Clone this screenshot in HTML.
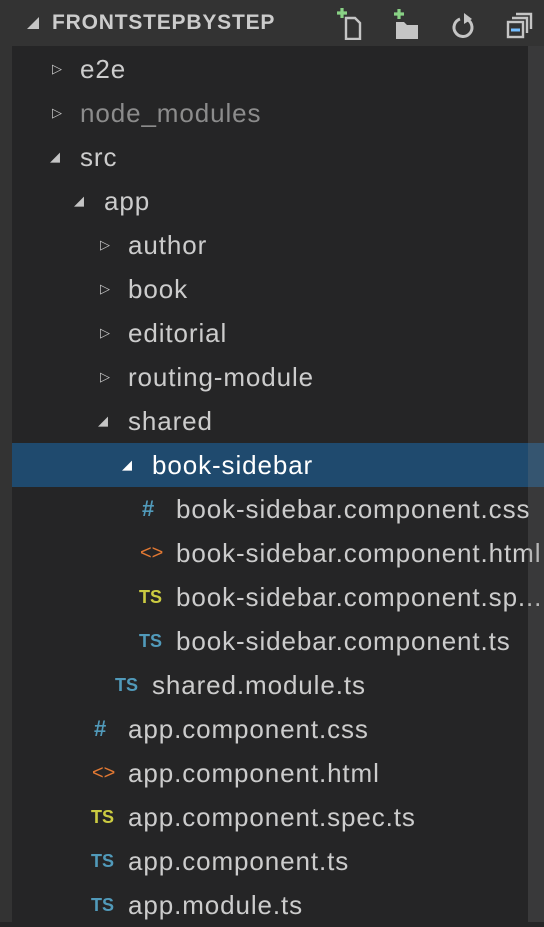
<!DOCTYPE html>
<html><head><meta charset="utf-8"><style>
*{margin:0;padding:0;box-sizing:border-box}
body{width:544px;height:922px;overflow:hidden;background:#252526;font-family:"Liberation Sans",sans-serif;position:relative}
.strip{position:absolute;left:0;top:0;width:12px;height:922px;background:#333}
.hdr{position:absolute;left:12px;top:0;width:532px;height:46px;background:#333}
.hdr .t{position:absolute;left:40px;top:11px;font-size:21px;font-weight:bold;color:#ccc;letter-spacing:0.8px}
.row{position:absolute;left:12px;width:532px;height:44px;color:#ccc;font-size:26px;letter-spacing:0.9px;line-height:44px;white-space:nowrap;overflow:hidden}
.row.sel{background:#1f4a6e;color:#fff}
.arr{position:absolute;top:0;font-size:13px;color:#c5c5c5;letter-spacing:0}
.tx{position:absolute;top:0}
.ic{position:absolute;top:0;font-weight:bold;letter-spacing:0}
.sb{position:absolute;left:528px;top:46px;width:16px;height:876px;background:rgba(121,121,121,0.25)}
</style></head><body>
<div class="strip"></div>
<div class="hdr">
<svg style="position:absolute;left:14px;top:16px" width="14" height="14"><polygon points="13,1 13,13 1,13" fill="#c5c5c5"/></svg>
<div class="t">FRONTSTEPBYSTEP</div>
<svg style="position:absolute;left:324px;top:6px" width="30" height="34"><path d="M10 12h9l5 5v16H10z" fill="none" stroke="#c5c5c5" stroke-width="2.4"/><path d="M6 2v10M1 7h10" stroke="#89d185" stroke-width="3.2"/></svg>
<svg style="position:absolute;left:380px;top:6px" width="30" height="34"><path d="M4 16h8l3 3h11v14H4z" fill="#c5c5c5"/><path d="M7 3v10M2 8h10" stroke="#89d185" stroke-width="3.2"/></svg>
<svg style="position:absolute;left:436px;top:6px" width="30" height="34"><path d="M20 14a9 9 0 1 1-8-1" fill="none" stroke="#c5c5c5" stroke-width="3"/><polygon points="16,7 24,13 16,18" fill="#c5c5c5"/></svg>
<svg style="position:absolute;left:492px;top:6px" width="30" height="34"><rect x="4" y="16" width="15" height="15" fill="none" stroke="#c5c5c5" stroke-width="2.4"/><path d="M8 12h15v15M12 8h15v15" fill="none" stroke="#c5c5c5" stroke-width="2.4"/><path d="M7 24h9" stroke="#75beff" stroke-width="3"/></svg>
</div>
<div class="row" style="top:47px"><span class="arr" style="left:40px">▷</span><span class="tx" style="left:68px">e2e</span></div>
<div class="row" style="top:91px;color:#8c8c8c"><span class="arr" style="left:40px">▷</span><span class="tx" style="left:68px">node_modules</span></div>
<div class="row" style="top:135px"><span class="arr" style="left:38px">◢</span><span class="tx" style="left:68px">src</span></div>
<div class="row" style="top:179px"><span class="arr" style="left:62px">◢</span><span class="tx" style="left:92px">app</span></div>
<div class="row" style="top:223px"><span class="arr" style="left:88px">▷</span><span class="tx" style="left:116px">author</span></div>
<div class="row" style="top:267px"><span class="arr" style="left:88px">▷</span><span class="tx" style="left:116px">book</span></div>
<div class="row" style="top:311px"><span class="arr" style="left:88px">▷</span><span class="tx" style="left:116px">editorial</span></div>
<div class="row" style="top:355px"><span class="arr" style="left:88px">▷</span><span class="tx" style="left:116px">routing-module</span></div>
<div class="row" style="top:399px"><span class="arr" style="left:86px">◢</span><span class="tx" style="left:116px">shared</span></div>
<div class="row sel" style="top:443px"><span class="arr" style="left:110px;color:#fff">◢</span><span class="tx" style="left:140px">book-sidebar</span></div>
<div class="row" style="top:487px"><span class="ic" style="left:130px;color:#519aba;font-size:22px">#</span><span class="tx" style="left:164px">book-sidebar.component.css</span></div>
<div class="row" style="top:531px"><span class="ic" style="left:128px;color:#e37933;font-size:20px;font-weight:normal">&lt;&gt;</span><span class="tx" style="left:164px">book-sidebar.component.html</span></div>
<div class="row" style="top:575px"><span class="ic" style="left:127px;color:#cbcb41;font-size:18px">TS</span><span class="tx" style="left:164px">book-sidebar.component.sp...</span></div>
<div class="row" style="top:619px"><span class="ic" style="left:127px;color:#519aba;font-size:18px">TS</span><span class="tx" style="left:164px">book-sidebar.component.ts</span></div>
<div class="row" style="top:663px"><span class="ic" style="left:103px;color:#519aba;font-size:18px">TS</span><span class="tx" style="left:140px">shared.module.ts</span></div>
<div class="row" style="top:707px"><span class="ic" style="left:82px;color:#519aba;font-size:22px">#</span><span class="tx" style="left:116px">app.component.css</span></div>
<div class="row" style="top:751px"><span class="ic" style="left:80px;color:#e37933;font-size:20px;font-weight:normal">&lt;&gt;</span><span class="tx" style="left:116px">app.component.html</span></div>
<div class="row" style="top:795px"><span class="ic" style="left:79px;color:#cbcb41;font-size:18px">TS</span><span class="tx" style="left:116px">app.component.spec.ts</span></div>
<div class="row" style="top:839px"><span class="ic" style="left:79px;color:#519aba;font-size:18px">TS</span><span class="tx" style="left:116px">app.component.ts</span></div>
<div class="row" style="top:883px"><span class="ic" style="left:79px;color:#519aba;font-size:18px">TS</span><span class="tx" style="left:116px">app.module.ts</span></div>
<div class="sb"></div>
</body></html>
